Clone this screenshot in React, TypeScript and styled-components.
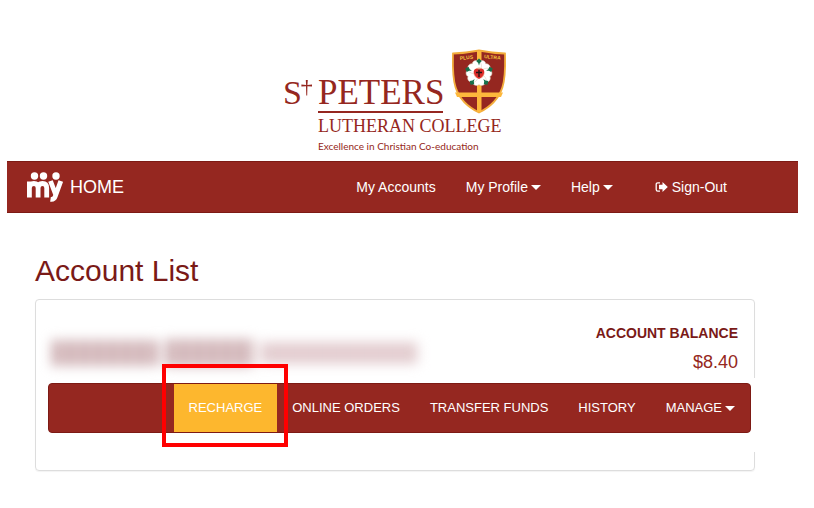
import React from "react";
import styled, { createGlobalStyle } from "styled-components";

const maroon = "#952720";
const deep = "#7a1a17";
const gold = "#fdb72e";

const GlobalStyle = createGlobalStyle`
  *, *::before, *::after { box-sizing: border-box; }
  body {
    margin: 0;
    background: #fff;
    color: ${deep};
    font: 14px/20px "Liberation Sans", Arial, sans-serif;
  }
`;

const Page = styled.div`
  padding: 49px 16px 36px 7px;
`;

const Masthead = styled.header`
  display: flex;
  justify-content: center;
  padding: 0 14px 8px 0;
`;

const Logo = styled.svg`
  display: block;
  width: 224px;
  height: 104px;
`;

const TopBar = styled.nav`
  display: flex;
  align-items: center;
  justify-content: space-between;
  height: 52px;
  padding: 0 56px 0 20px;
  background: ${maroon};
  border: solid #7d1a14;
  border-width: 1px 0;
`;

const Brand = styled.a`
  display: flex;
  align-items: center;
  gap: 7px;
  color: #fff;
  font-size: 18px;
  text-decoration: none;
`;

const BrandMark = styled.svg`
  width: 36px;
  height: 32px;
`;

const Menu = styled.div`
  display: flex;
`;

const MenuLink = styled.a<{ $apart?: boolean }>`
  display: flex;
  align-items: center;
  gap: 4px;
  padding: 15px;
  margin-left: ${(p) => (p.$apart ? "12px" : "0")};
  color: #fff;
  text-decoration: none;
`;

const MenuButton = styled.button`
  display: flex;
  align-items: center;
  gap: 3px;
  padding: 15px;
  border: 0;
  background: none;
  color: #fff;
  font: inherit;
  text-transform: inherit;
  cursor: pointer;
`;

const CaretShape = styled.span`
  border: 5px solid transparent;
  border-top-color: currentColor;
  border-bottom: 0;
`;

const SignOutIcon = styled.svg`
  width: 13px;
  height: 12px;
`;

const Content = styled.main`
  padding: 40px 43px 0 28px;
`;

const Title = styled.h1`
  margin: 0 0 11px;
  font-size: 30px;
  line-height: 35px;
  font-weight: 400;
`;

const Card = styled.section`
  border: 1px solid #ddd;
  border-radius: 4px;
  box-shadow: 0 1px 1px rgba(0, 0, 0, 0.05);
  padding: 22px 0 18px 12px;
`;

const Summary = styled.div`
  display: flex;
  justify-content: space-between;
  height: 56px;
  padding-right: 16px;
`;

const HiddenName = styled.div`
  display: flex;
  align-items: center;
  gap: 8px;
  padding: 6px 0 0 4px;
  filter: blur(6px);
`;

const NameSmear = styled.span<{ $width: number; $height: number; $tint: string }>`
  width: ${(p) => p.$width}px;
  height: ${(p) => p.$height}px;
  background: repeating-linear-gradient(
    90deg,
    ${(p) => p.$tint} 0 9px,
    #ecdfdf 9px 14px
  );
`;

const Balance = styled.dl`
  margin: 0;
  text-align: right;
`;

const BalanceLabel = styled.dt`
  padding-bottom: 8px;
  line-height: 22px;
  font-weight: 700;
  text-transform: uppercase;
`;

const BalanceValue = styled.dd`
  margin: 0;
  color: ${maroon};
  font-size: 18px;
  line-height: 20px;
`;

const ActionArea = styled.div`
  margin-right: -2px;
  padding: 5px 5px 19px 0;
  background: #fff;
`;

const ActionBar = styled.nav`
  display: flex;
  justify-content: flex-end;
  height: 50px;
  background: ${maroon};
  border: 1px solid #7d1a14;
  border-radius: 4px;
  font-size: 13px;
  text-transform: uppercase;
  color: #fff;
`;

const Action = styled.a<{ $active?: boolean }>`
  position: relative;
  padding: 14px 15px;
  background: ${(p) => (p.$active ? gold : "transparent")};
  color: #fff;
  text-decoration: none;
`;

const Highlight = styled.span`
  position: absolute;
  inset: -20px -11px -15px -12px;
  border: 4px solid #f00;
  pointer-events: none;
  z-index: 1;
`;

const Caret = () => <CaretShape aria-hidden="true" />;

const CollegeLogo = () => (
  <Logo viewBox="284 49 224 104" role="img" aria-label="St Peters Lutheran College">
    <g fill={maroon} fontFamily='"Liberation Serif", serif'>
      <text x="283" y="104" fontSize="34">S</text>
      <path d="M305.8 80h2l-.4 5 4.600-.4v2l-4.600-.4-.2 9.300h-.9l-.3-9.300-4.600.4v-2l4.700.4z" />
      <text x="318" y="104" fontSize="35">PETERS</text>
      <rect x="318" y="111" width="125" height="2" />
      <text x="318" y="132" fontSize="18">LUTHERAN COLLEGE</text>
      <text x="318" y="150" fontSize="10" fontFamily='"Lato", "Open Sans", sans-serif'>
        Excellence in Christian Co-education
      </text>
    </g>
    <path
      d="M453 53.500Q466 53 479 50.500Q492 53 505 53.500C505.500 76 507 99 479 112.500C451 99 452.500 76 453 53.500Z"
      fill={maroon}
      stroke="#f3ad3c"
      strokeWidth="1.800"
    />
    <path d="M477 51h4.500v60.500l-2.500 1-2-1zM455 92.500h48l-2 4.500H457z" fill="#fdb83c" />
    <g fill="#f5c542" fontFamily='"Liberation Sans", sans-serif' fontSize="5" fontWeight="700">
      <text x="460" y="60" transform="rotate(-6 460 60)">PLUS</text>
      <text x="484" y="58" transform="rotate(6 484 58)">ULTRA</text>
    </g>
    <g fill="#fff" stroke="#d8c9b4" strokeWidth=".5">
      {[36, 108, 180, 252, 324].map((a) => (
        <path
          key={a}
          d="M479 73c-8-3-9-9-5-11.800 2-1.300 4-.8 5 .4 1-1.200 3-1.700 5-.4 4 2.800 3 8.800-5 11.800z"
          transform={`rotate(${a} 479 73)`}
        />
      ))}
    </g>
    <g fill="#16704a">
      {[0, 72, 144, 216, 288].map((a) => (
        <path key={a} d="M479 58.500l2.800 2.500-2 2-.8 2.500-.8-2.500-2-2z" transform={`rotate(${a} 479 73)`} />
      ))}
    </g>
    <circle cx="479" cy="73" r="5.500" fill="#f0a58d" />
    <path
      d="M479 79c-3-2-5.200-4.500-5.200-7 0-3.500 3.700-4.300 5.200-1.800 1.500-2.500 5.200-1.700 5.200 1.800 0 2.500-2.200 5-5.200 7z"
      fill="#dc2c2a"
    />
    <path d="M478.300 69.500h1.400v2.300h2.300v1.400h-2.300v3.800h-1.400v-3.800H476v-1.400h2.300z" fill="#241514" />
  </Logo>
);

const MyMark = () => (
  <BrandMark viewBox="27 171 36 32" role="img" aria-label="my">
    <g fill="#fff">
      <circle cx="34.500" cy="176" r="3.700" />
      <circle cx="43.500" cy="176" r="3.700" />
      <circle cx="56" cy="176" r="3.700" />
    </g>
    <g fill="none" stroke="#fff" strokeWidth="4.800">
      <path d="M29.400 197.500v-16M29.400 188q0-4.500 4.500-4.500 4.200 0 4.200 4.500v9.500M38.100 188q0-4.500 4.400-4.500 4.200 0 4.200 4.500v9.500" />
      <path d="M50.500 181l5.300 14M60.800 181L55.200 196.500q-1.200 3.300-4.700 2.800" />
    </g>
  </BrandMark>
);

export default function App() {
  return (
    <>
      <GlobalStyle />
      <Page>
        <Masthead>
          <CollegeLogo />
        </Masthead>
        <TopBar aria-label="Main">
          <Brand href="#home">
            <MyMark />
            HOME
          </Brand>
          <Menu>
            <MenuLink href="#accounts">My Accounts</MenuLink>
            <MenuButton type="button">My Profile<Caret /></MenuButton>
            <MenuButton type="button">Help<Caret /></MenuButton>
            <MenuLink href="#sign-out" $apart>
              <SignOutIcon viewBox="0 0 13 12" aria-hidden="true">
                <path d="M5 1.800H2.800Q1.200 1.800 1.200 3.400v5.200q0 1.600 1.600 1.600H5" fill="none" stroke="#fff" strokeWidth="1.300" />
                <path d="M7.500 1L12.800 6 7.500 11V8.200H4V3.800h3.500z" fill="#fff" />
              </SignOutIcon>
              Sign-Out
            </MenuLink>
          </Menu>
        </TopBar>
        <Content>
          <Title>Account List</Title>
          <Card>
            <Summary>
              <HiddenName aria-hidden="true">
                <NameSmear $width={106} $height={26} $tint="#c9a8ac" />
                <NameSmear $width={88} $height={28} $tint="#c9a8ac" />
                <NameSmear $width={156} $height={22} $tint="#dfc5c9" />
              </HiddenName>
              <Balance>
                <BalanceLabel>Account Balance</BalanceLabel>
                <BalanceValue>$8.40</BalanceValue>
              </Balance>
            </Summary>
            <ActionArea>
              <ActionBar aria-label="Account actions">
                <Action href="#recharge" $active>
                  Recharge
                  <Highlight />
                </Action>
                <Action href="#orders">Online Orders</Action>
                <Action href="#transfer">Transfer Funds</Action>
                <Action href="#history">History</Action>
                <MenuButton type="button">Manage<Caret /></MenuButton>
              </ActionBar>
            </ActionArea>
          </Card>
        </Content>
      </Page>
    </>
  );
}
